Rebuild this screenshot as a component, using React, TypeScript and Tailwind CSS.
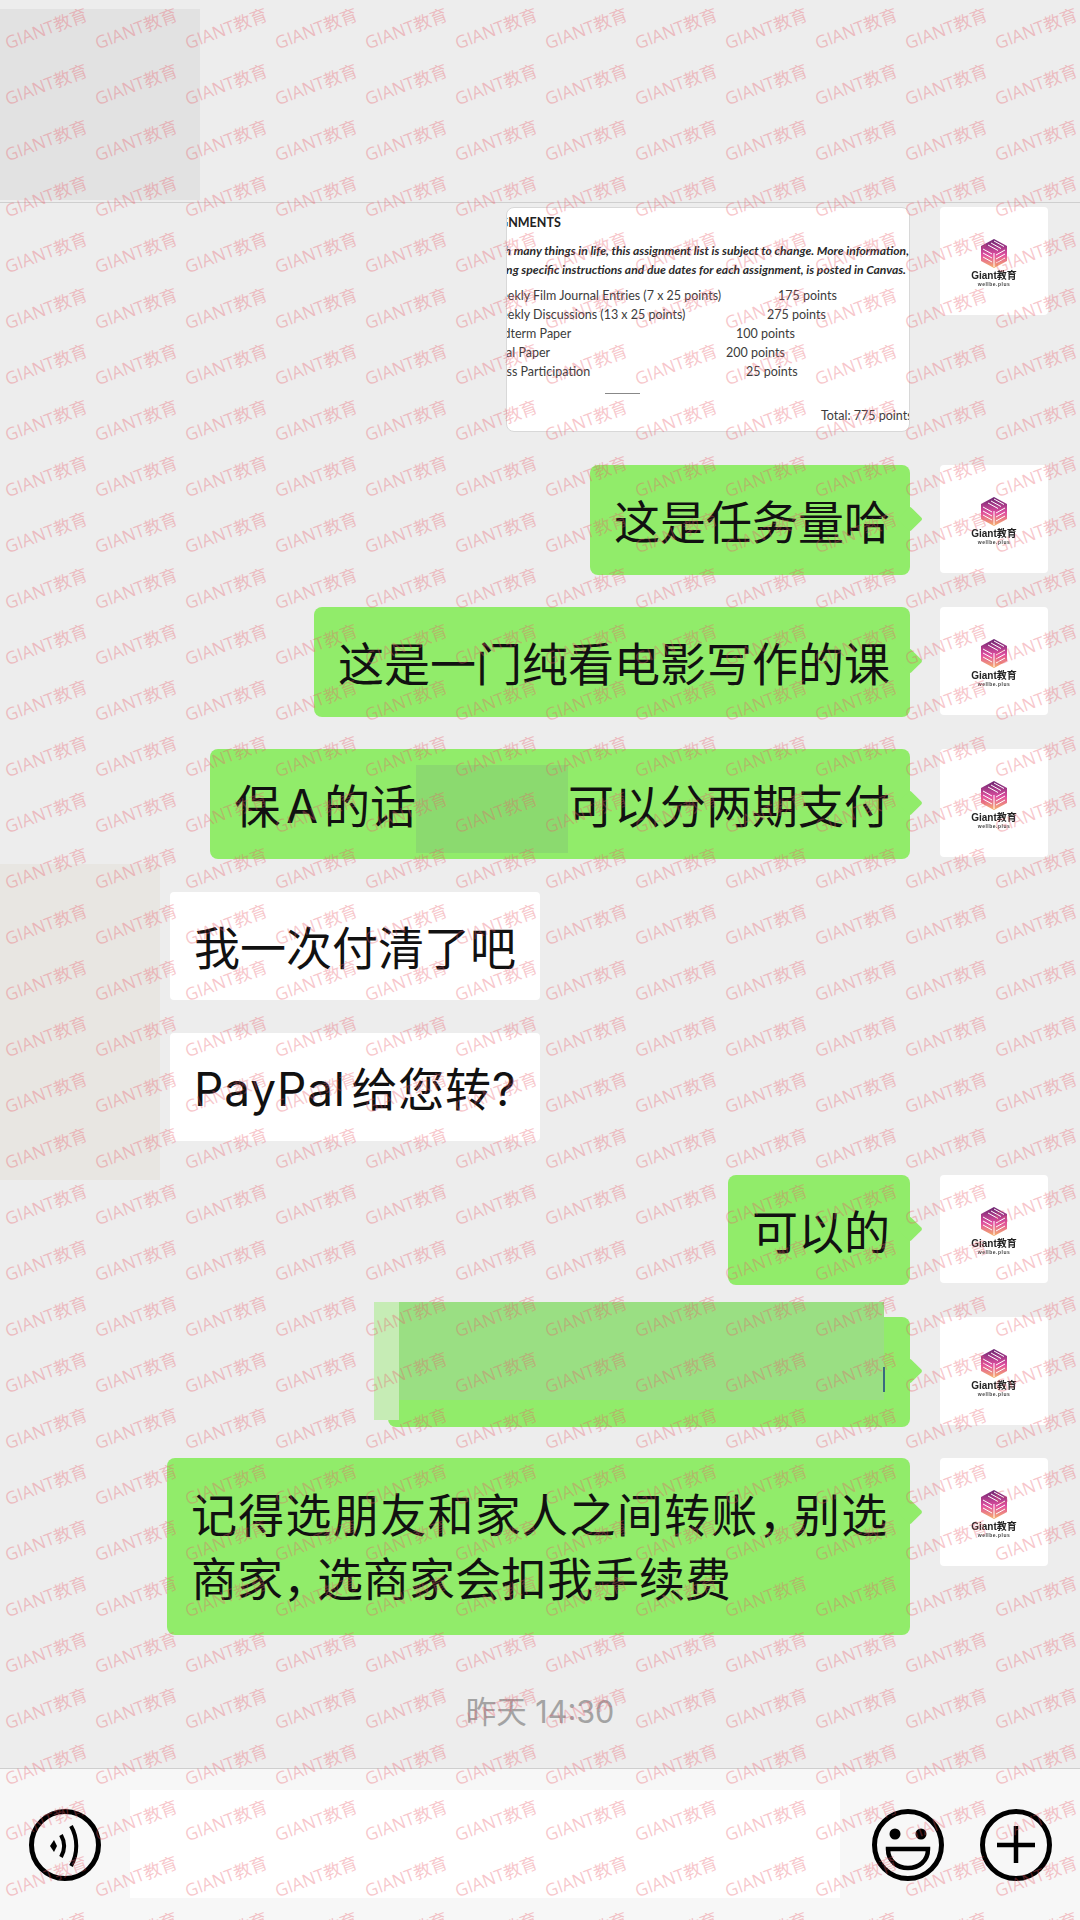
import { FC, ReactNode } from "react";

const CJK = "font-['Inter','Noto_Sans_CJK_SC',sans-serif]";

const rows = [
  { name: "Weekly Film Journal Entries (7 x 25 points)", pts: "175 points", w: "w-[289px]" },
  { name: "Weekly Discussions (13 x 25 points)", pts: "275 points", w: "w-[278px]" },
  { name: "Midterm Paper", pts: "100 points", w: "w-[247px]" },
  { name: "Final Paper", pts: "200 points", w: "w-[237px]" },
  { name: "Class Participation", pts: "25 points", w: "w-[257px]" },
];

const Logo: FC = () => (
  <div className="flex flex-col items-center blur-[0.4px]">
    <svg width="28" height="31" viewBox="0 0 28 31">
      <defs>
        <linearGradient id="cube" x1="0" y1="0" x2="0" y2="1">
          <stop offset="0" stopColor="#6a2470" />
          <stop offset="0.55" stopColor="#e04fa0" />
          <stop offset="1" stopColor="#f5b26a" />
        </linearGradient>
      </defs>
      <path d="M14 1 27 8v15l-13 7L1 23V8z" fill="url(#cube)" />
      <path d="M14 3 24 8.5M11 5 21 10.5M8 7l10 5.5M14 15v14M16 17l9-5M16 21l9-5M16 25l9-5M3 11l9 5M3 15l9 5M3 19l9 5" stroke="#fff" strokeWidth="1" fill="none" />
    </svg>
    <span className="font-['Liberation_Sans','Noto_Sans_CJK_SC',sans-serif] font-bold text-[10px] leading-[11px] text-[#222] mt-[1px]">Giant教育</span>
    <span className="font-['Liberation_Sans',sans-serif] font-bold text-[5px] leading-[6px] tracking-[0.5px] text-[#444]">wellbe.plus</span>
  </div>
);

const Avatar: FC = () => (
  <div className="w-[108px] h-[108px] bg-white rounded-[4px] shrink-0 flex items-center justify-center ml-[30px] pt-[2px]">
    <Logo />
  </div>
);

const Sent: FC<{ className?: string; children?: ReactNode }> = ({ className, children }) => (
  <div className={`flex justify-end items-start pr-[32px] ${className ?? ""}`}>
    <div className="relative bg-[#91ec6a] rounded-[8px] min-h-[110px] pl-[24px] pr-[20px] pt-[5px] flex items-center text-[46px] text-[#111]">
      {children}
      <div className="absolute right-[-9px] top-[45px] w-[18px] h-[18px] rotate-45 bg-[#91ec6a] rounded-[2px]" />
    </div>
    <Avatar />
  </div>
);

const Received: FC<{ className?: string; children: ReactNode }> = ({ className, children }) => (
  <div className={`pl-[170px] ${className ?? ""}`}>
    <div className="w-[370px] h-[108px] bg-white rounded-[4px] pl-[24px] pt-[5px] flex items-center text-[46px] text-[#111] whitespace-nowrap">
      {children}
    </div>
  </div>
);

const VoiceIcon: FC = () => (
  <svg width="74" height="74" viewBox="0 0 74 74" fill="none" stroke="#000">
    <circle cx="37" cy="37" r="33.5" strokeWidth="5" />
    <path d="M22 38l4-6 3 6-3 6z" fill="#000" stroke="none" />
    <path d="M33 27c4 7 4 15 0 22" strokeWidth="4" />
    <path d="M43 18c7 12 7 28 0 40" strokeWidth="4" />
  </svg>
);

const SmileIcon: FC = () => (
  <svg width="74" height="74" viewBox="0 0 74 74" fill="none" stroke="#000">
    <circle cx="37" cy="37" r="33.5" strokeWidth="5" />
    <circle cx="24" cy="26" r="5.5" fill="#000" stroke="none" />
    <circle cx="50" cy="26" r="5.5" fill="#000" stroke="none" />
    <path d="M17 41h40c0 12-9 19-20 19s-20-7-20-19z" strokeWidth="4.5" />
  </svg>
);

const PlusIcon: FC = () => (
  <svg width="74" height="74" viewBox="0 0 74 74" fill="none" stroke="#000">
    <circle cx="37" cy="37" r="33.5" strokeWidth="5" />
    <path d="M37 18v37M18 37h38" strokeWidth="4.5" />
  </svg>
);

export default function App() {
  const marks = Array.from({ length: 13 * 35 });
  return (
    <div className={`relative w-[1080px] h-[1920px] overflow-hidden bg-[#ededed] flex flex-col ${CJK}`}>
      {/* Top bar with the blanked title */}
      <header className="h-[203px] shrink-0 border-b border-[#cfcfcf] pt-[9px]">
        <div className="w-[200px] h-[191px] bg-[#e2e2e2]" />
      </header>

      {/* Blanked strip left of the received messages */}
      <div className="absolute left-0 top-[864px] w-[160px] h-[316px] bg-[#e8e6e2]" />

      {/* Messages */}
      <main className="relative flex-1 flex flex-col pt-[4px]">
        <div className="flex justify-end items-start pr-[32px]">
          <div className="w-[404px] h-[225px] bg-white rounded-[8px] overflow-hidden border border-[#d8d8d8] font-['Lato',sans-serif] text-[12.5px] leading-[19px] text-[#3c3c3c] whitespace-nowrap pt-[5px]">
            <div className="font-bold ml-[-34px] text-[#222]">ASSIGNMENTS</div>
            <div className="mt-[9px] font-bold italic text-[12.1px] text-[#2a2a2a] flex flex-col items-end">
              <div>As with many things in life, this assignment list is subject to change. More information,</div>
              <div className="pr-[3px]">including specific instructions and due dates for each assignment, is posted in Canvas.</div>
            </div>
            <div className="mt-[7px] ml-[-18px]">
              {rows.map((r) => (
                <div key={r.name} className="flex">
                  <span className={`${r.w} shrink-0`}>{r.name}</span>
                  <span>{r.pts}</span>
                </div>
              ))}
            </div>
            <div className="mt-[12px] ml-[98px] w-[35px] border-t border-[#888]" />
            <div className="mt-[12px] ml-[314px]">Total: 775 points</div>
          </div>
          <Avatar />
        </div>

        <Sent className="mt-[33px]">这是任务量哈</Sent>
        <Sent className="mt-[32px]">这是一门纯看电影写作的课</Sent>
        <Sent className="mt-[32px]">
          <span className="[word-spacing:-7px] whitespace-pre">保 A 的话</span>
          <span className="w-[152px] h-[88px] mt-[5px] bg-[#8bda6f]" />
          <span>可以分两期支付</span>
        </Sent>

        <Received className="mt-[33px]">我一次付清了吧</Received>
        <Received className="mt-[33px]">
          <span className="tracking-[0.8px] [word-spacing:-8px] whitespace-pre">PayPal 给您转?</span>
        </Received>

        <Sent className="mt-[34px]">可以的</Sent>

        <div className="mt-[32px] flex justify-end items-start pr-[32px]">
          <div className="relative w-[522px] h-[110px] bg-[#91ec6a] rounded-[8px]">
            {/* Blanked text laid over the bubble */}
            <div className="absolute left-[-14px] top-[-15px] w-[25px] h-[118px] bg-[#c6ecb5]" />
            <div className="absolute left-[11px] top-[-15px] w-[485px] h-[98px] bg-[#9adf83]" />
            <div className="absolute left-[495px] top-[50px] w-[2px] h-[25px] bg-[#3a6a80]" />
            <div className="absolute right-[-9px] top-[45px] w-[18px] h-[18px] rotate-45 bg-[#91ec6a] rounded-[2px]" />
          </div>
          <Avatar />
        </div>

        <Sent className="mt-[31px]">
          <div className="w-[699px] pt-[20px] pb-[24px] leading-[64px] whitespace-nowrap">
            <div className="tracking-[1.3px]">
              记得选朋友和家人之间转账
              <span className="[font-feature-settings:'halt'] pr-[11px]">，</span>
              别选
            </div>
            <div>
              商家
              <span className="[font-feature-settings:'halt'] pr-[11px]">，</span>
              选商家会扣我手续费
            </div>
          </div>
        </Sent>

        <div className="flex-1 flex items-center justify-center pt-[20px]">
          <span className="text-[30.5px] text-[#a3a3a3]">昨天 14:30</span>
        </div>
      </main>

      {/* Input bar */}
      <footer className="h-[152px] shrink-0 bg-[#f7f7f7] border-t border-[#cfcfcf] flex items-center">
        <div className="w-[130px] flex justify-center">
          <VoiceIcon />
        </div>
        <div className="w-[710px] h-[108px] bg-white mt-[-1px]" />
        <div className="flex-1 flex items-center pl-[31px] gap-[34px]">
          <SmileIcon />
          <PlusIcon />
        </div>
      </footer>

      {/* Watermark */}
      <div className="absolute left-[1px] top-[1px] pointer-events-none grid grid-cols-[repeat(13,90px)] auto-rows-[56px]">
        {marks.map((_, i) => (
          <div key={i} className="flex items-center justify-center overflow-visible">
            <span className="-rotate-[20deg] whitespace-nowrap text-[17.5px] leading-none text-[rgba(232,90,105,0.34)] font-['Open_Sans','Noto_Sans_CJK_SC',sans-serif]">
              GIANT教育
            </span>
          </div>
        ))}
      </div>
    </div>
  );
}
